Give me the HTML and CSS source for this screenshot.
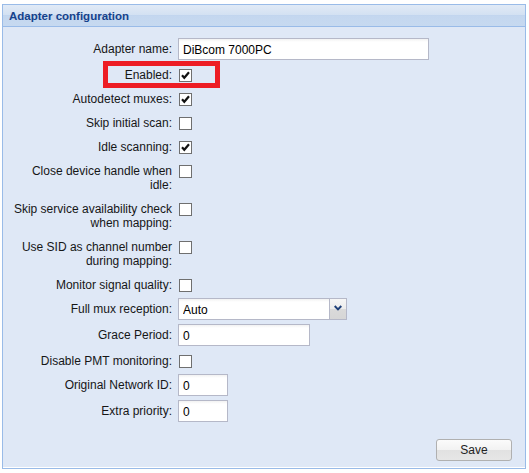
FILE: index.html
```html
<!DOCTYPE html>
<html lang="en">
<head>
<meta charset="utf-8">
<title>Adapter configuration</title>
<link rel="stylesheet" href="styles.css">
</head>
<body>
<div class="panel">
  <div class="panel-header">Adapter configuration</div>
  <div class="panel-body">
    <form class="form">
      <div class="row">
        <label class="lbl">Adapter name:</label>
        <div class="fld"><input class="txt w-name" type="text" value="DiBcom 7000PC"></div>
      </div>
      <div class="row row-marked">
        <label class="lbl">Enabled:</label>
        <div class="fld"><span class="cb"><svg viewBox="0 0 11 11" width="11" height="11"><path d="M2 5.2 L4.3 7.8 L9 2.2" fill="none" stroke="#111" stroke-width="2.2"/></svg></span></div>
        <span class="marker"></span>
      </div>
      <div class="row">
        <label class="lbl">Autodetect muxes:</label>
        <div class="fld"><span class="cb"><svg viewBox="0 0 11 11" width="11" height="11"><path d="M2 5.2 L4.3 7.8 L9 2.2" fill="none" stroke="#111" stroke-width="2.2"/></svg></span></div>
      </div>
      <div class="row">
        <label class="lbl">Skip initial scan:</label>
        <div class="fld"><span class="cb"></span></div>
      </div>
      <div class="row">
        <label class="lbl">Idle scanning:</label>
        <div class="fld"><span class="cb"><svg viewBox="0 0 11 11" width="11" height="11"><path d="M2 5.2 L4.3 7.8 L9 2.2" fill="none" stroke="#111" stroke-width="2.2"/></svg></span></div>
      </div>
      <div class="row">
        <label class="lbl">Close device handle when idle:</label>
        <div class="fld"><span class="cb"></span></div>
      </div>
      <div class="row">
        <label class="lbl">Skip service availability check when mapping:</label>
        <div class="fld"><span class="cb"></span></div>
      </div>
      <div class="row">
        <label class="lbl">Use SID as channel number during mapping:</label>
        <div class="fld"><span class="cb"></span></div>
      </div>
      <div class="row">
        <label class="lbl">Monitor signal quality:</label>
        <div class="fld"><span class="cb"></span></div>
      </div>
      <div class="row">
        <label class="lbl">Full mux reception:</label>
        <div class="fld">
          <div class="combo">
            <input class="txt combo-input" type="text" value="Auto" readonly>
            <span class="trigger"><svg viewBox="0 0 9 6" width="8" height="6"><path d="M0.8 0.8 L4.5 4.6 L8.2 0.8" fill="none" stroke="#1e3f78" stroke-width="2.2"/></svg></span>
          </div>
        </div>
      </div>
      <div class="row">
        <label class="lbl">Grace Period:</label>
        <div class="fld"><input class="txt w-grace" type="text" value="0"></div>
      </div>
      <div class="row">
        <label class="lbl">Disable PMT monitoring:</label>
        <div class="fld"><span class="cb"></span></div>
      </div>
      <div class="row">
        <label class="lbl">Original Network ID:</label>
        <div class="fld"><input class="txt w-num" type="text" value="0"></div>
      </div>
      <div class="row">
        <label class="lbl">Extra priority:</label>
        <div class="fld"><input class="txt w-num" type="text" value="0"></div>
      </div>
    </form>
    <div class="footer">
      <button class="btn" type="button">Save</button>
    </div>
  </div>
</div>
</body>
</html>
```

FILE: styles.css
```css
html, body {
  margin: 0;
  padding: 0;
  background: #ffffff;
}

body {
  font-family: Tahoma, "Liberation Sans", Arial, sans-serif;
  font-size: 12px;
  color: #111;
}

.panel {
  margin: 4px 0 0 2px;
  width: 524px;
  height: 465px;
  box-sizing: border-box;
  border: 1px solid #99bbe8;
  display: flex;
  flex-direction: column;
  background: #dfe8f6;
}

.panel-header {
  height: 21px;
  border-bottom: 1px solid #99bbe8;
  background: linear-gradient(#e1eaf6 0, #d3e1f2 10px, #c0d4ee 10px, #c4d7ef 11px, #c6d9f0 100%);
  color: #15428b;
  font-weight: bold;
  font-size: 11.5px;
  line-height: 22px;
  padding-left: 6px;
}

.panel-body {
  flex: 1;
  display: flex;
  flex-direction: column;
  padding: 11px 13px 6px 8px;
  border-bottom: 1px solid #ffffff;
}

.form {
  display: flex;
  flex-direction: column;
}

.row {
  display: flex;
  align-items: flex-start;
  margin-bottom: 4px;
  min-height: 20px;
  position: relative;
}

.lbl {
  width: 161px;
  padding: 4px 6px 2px 0;
  text-align: right;
  line-height: 14px;
  flex: none;
  color: #161616;
}

.fld {
  flex: none;
}

.txt {
  box-sizing: border-box;
  height: 22px;
  margin: 0;
  padding: 2px 4px 0;
  border: 1px solid #b5b8c8;
  background: linear-gradient(#f2f2f2 0, #ffffff 3px, #ffffff 100%);
  font: 12px Tahoma, "Liberation Sans", Arial, sans-serif;
  color: #000;
  outline: none;
  display: block;
}

.w-name { width: 251px; }
.w-grace { width: 132px; }
.w-num { width: 50px; }

.combo {
  display: flex;
  width: 169px;
}

.combo-input {
  width: 151px;
  border-right: none;
}

.trigger {
  box-sizing: border-box;
  width: 18px;
  height: 22px;
  border: 1px solid #b5b8c8;
  background: linear-gradient(#f6f6f6 0, #ececec 50%, #dadada 50%, #d6d6d6 100%);
  display: flex;
  align-items: center;
  justify-content: center;
  padding-bottom: 3px;
}

.cb {
  box-sizing: border-box;
  display: flex;
  align-items: center;
  justify-content: center;
  width: 13px;
  height: 13px;
  margin: 5px 0 0 1px;
  border: 1px solid #6f6f6f;
  background: #ffffff;
}

/* red annotation frame around the Enabled row */
.marker {
  position: absolute;
  left: 92px;
  top: -3px;
  width: 117px;
  height: 27px;
  box-sizing: border-box;
  border: 5px solid #ed1c24;
  pointer-events: none;
}

.footer {
  margin-top: auto;
  display: flex;
  justify-content: flex-end;
}

.btn {
  width: 76px;
  height: 22px;
  margin: 0;
  padding: 0;
  border: 1px solid #b0b0b0;
  border-radius: 3px;
  background: linear-gradient(#fbfbfb 0, #f2f2f2 50%, #e1e1e1 50%, #e6e6e6 100%);
  font: 12px Tahoma, "Liberation Sans", Arial, sans-serif;
  color: #222;
}
```
